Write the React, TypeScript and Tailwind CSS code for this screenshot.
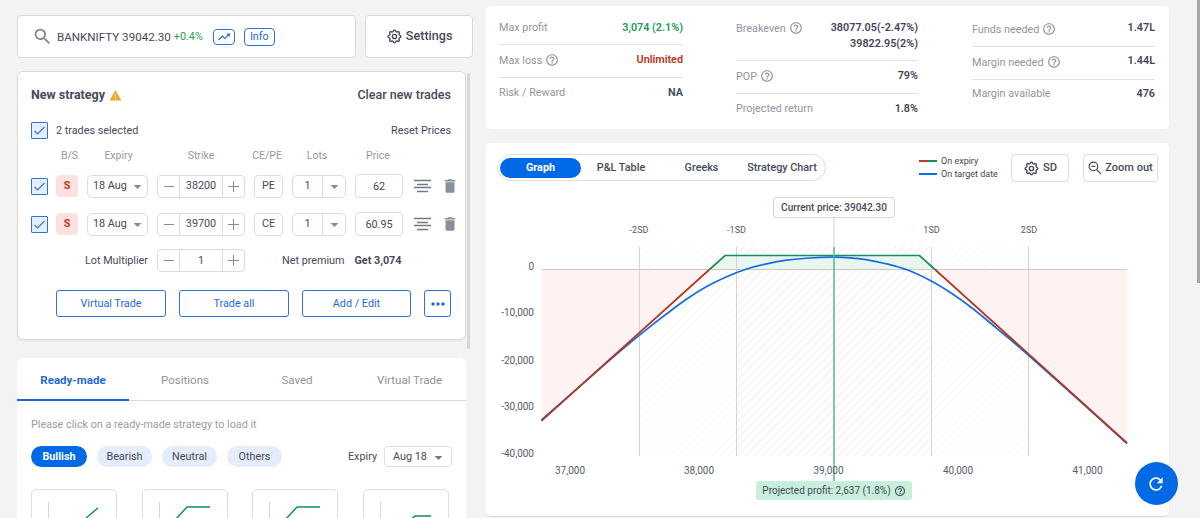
import type { ReactNode } from "react";
import { MdArrowDropDown, MdDelete, MdHelpOutline, MdMoreHoriz, MdRefresh, MdSearch, MdTrendingUp, MdWarning } from "react-icons/md";
import { TbSettings } from "react-icons/tb";

const trades = [
  { strike: "38200", type: "PE", price: "62" },
  { strike: "39700", type: "CE", price: "60.95" },
];

// Target date P&L curve
const curve = [
  [541.5, 420], [600, 368.5], [625, 347], [646.7, 329.3], [666.7, 313.8], [686.7, 299], [706.7, 286.5],
  [726.7, 276.7], [746.7, 269], [766.7, 263.8], [786.7, 260.2], [810, 258], [833, 257.2],
  [850, 257.8], [866, 259.6], [886, 263.7], [908.3, 270.3], [931.7, 281.3], [953.3, 294.5],
  [973.3, 309], [996.7, 328.3], [1030, 356.5], [1127, 443.5],
];

function smooth(p: number[][]) {
  let d = `M${p[0][0]} ${p[0][1]}`;
  for (let i = 0; i < p.length - 1; i++) {
    const a = p[i - 1] ?? p[i];
    const b = p[i];
    const c = p[i + 1];
    const e = p[i + 2] ?? c;
    d += `C${b[0] + (c[0] - a[0]) / 6} ${b[1] + (c[1] - a[1]) / 6} ${c[0] - (e[0] - b[0]) / 6} ${c[1] - (e[1] - b[1]) / 6} ${c[0]} ${c[1]}`;
  }
  return d;
}

function Checkbox() {
  return (
    <span className="flex h-[17px] w-[17px] shrink-0 items-center justify-center rounded-[1px] border border-[#2f73d9] bg-[#e5effc]">
      <svg className="h-[11px] w-[13px] fill-none stroke-[#2f73d9]" viewBox="0 0 13 11">
        <path d="M1.5 6 4.5 9 11.5 2" strokeWidth="1.1" />
      </svg>
    </span>
  );
}

function Stepper({ value }: { value: string }) {
  return (
    <div className="flex h-[23px] w-[88px] shrink-0 rounded-[4px] border border-[#dcdcdc]">
      <span className="flex w-[21px] items-center justify-center">
        <span className="h-px w-[10px] bg-[#8c8c8c]" />
      </span>
      <span className="flex w-[44px] items-center justify-center border-x border-[#dcdcdc] pt-px">{value}</span>
      <span className="flex flex-1 items-center justify-center">
        <svg className="h-[11px] w-[11px] stroke-[#8c8c8c]" viewBox="0 0 11 11">
          <path d="M0 5.5h11M5.5 0v11" strokeWidth="1" />
        </svg>
      </span>
    </div>
  );
}

function TradeRow({ strike, type, price }: { strike: string; type: string; price: string }) {
  return (
    <div className="flex h-6 items-center">
      <Checkbox />
      <span className="ml-2 flex h-[22px] w-[22px] shrink-0 items-center justify-center rounded-[4px] bg-[#fde0e0] pt-px font-bold text-[#c9331f]">S</span>
      <span className="ml-[9px] flex h-[23px] w-[61px] shrink-0 items-center justify-between rounded-[5px] border border-[#dcdcdc] pt-px pl-[5px]">
        18 Aug
        <MdArrowDropDown className="h-[19px] w-[19px] text-[#8b8b8b]" />
      </span>
      <div className="ml-[9px]">
        <Stepper value={strike} />
      </div>
      <span className="ml-[9px] flex h-[23px] w-[29px] shrink-0 items-center justify-center rounded-[4px] border border-[#dcdcdc] pt-px">{type}</span>
      <span className="ml-[9px] flex h-[23px] w-[54px] shrink-0 rounded-[5px] border border-[#dcdcdc]">
        <span className="flex w-[30px] items-center justify-center border-r border-[#dcdcdc] pt-px">1</span>
        <span className="flex flex-1 items-center justify-center">
          <MdArrowDropDown className="h-[19px] w-[19px] text-[#8b8b8b]" />
        </span>
      </span>
      <span className="ml-[9px] flex h-6 w-[48px] shrink-0 items-center justify-center rounded-[4px] border border-[#dcdcdc] pt-[2px]">{price}</span>
      <svg className="ml-[11px] h-[14px] w-[17px] shrink-0 stroke-[#737a85]" viewBox="0 0 17 14">
        <path d="M0 1.5h17M3 5.5h11M0 8.5h17M3 12.5h11" strokeWidth="1.3" />
      </svg>
      <MdDelete className="ml-[10px] h-[18px] w-[18px] shrink-0 text-[#87909b]" />
    </div>
  );
}

function Stat({ label, help, className, children }: { label: string; help?: boolean; className: string; children: ReactNode }) {
  return (
    <div className={`flex items-start justify-between border-[#e2e2e2] ${className}`}>
      <span className="mt-px flex h-4 items-center gap-1 text-[#8f95a1]">
        {label}
        {help && <MdHelpOutline className="relative -top-px -ml-px h-[14px] w-[14px] text-[#8b919c]" />}
      </span>
      <span className="mt-px text-right leading-4 font-semibold text-[#3f4657]">{children}</span>
    </div>
  );
}

function Chart() {
  return (
    <svg className="block h-[326px] w-[683px]" viewBox="486 190 683 326" fontFamily="Roboto, sans-serif" fontSize="10" fill="#565b6b">
      <defs>
        <pattern id="hatch" width="8.4" height="8.4" patternUnits="userSpaceOnUse">
          <path d="M-1 9.4 9.4 -1M-2 2 2-2M6.4 10.4l4-4" stroke="#e6e6e6" strokeWidth=".9" />
        </pattern>
        <pattern id="hatchLight" width="8.4" height="8.4" patternUnits="userSpaceOnUse">
          <path d="M-1 9.4 9.4 -1M-2 2 2-2M6.4 10.4l4-4" stroke="#f1f1f1" strokeWidth=".9" />
        </pattern>
      </defs>

      {/* Hatched deviation bands */}
      <path d="M639.5 246.5H736.5V456H639.5zM931.5 246.5H1028.5V456H931.5z" fill="url(#hatchLight)" />
      <path d="M736.5 246.5H931.5V456H736.5z" fill="url(#hatch)" />

      {/* Profit and loss areas */}
      <path d="M541.5 269.5H709L541.5 420.5zM935 269.5H1127V443z" fill="#fff1f1" fillOpacity=".9" />
      <path d="M709 269.5 725 255.5H919.5L935 269.5z" fill="#e5f6ed" fillOpacity=".85" />

      <path d="M639.5 246.5V456M736.5 246.5V456M931.5 246.5V456M1028.5 246.5V456M834 217V247" stroke="#d3d3d8" />
      <path d="M541.5 269.5H1127" stroke="#cdc6ca" />

      <path d={smooth(curve)} fill="none" stroke="#156de3" strokeWidth="1.7" />
      <path d="M541.5 420.8 709.5 269.5M935 269.5 1127 443" fill="none" stroke="#b5371c" strokeWidth="1.7" />
      <path d="M709.5 269.5 725 255.5H919.5L935 269.5" fill="none" stroke="#149057" strokeWidth="1.7" />
      <path d="M834 247V482" stroke="#55b88f" strokeWidth="1.5" />

      <g textAnchor="end">
        <text x="534" y="270">0</text>
        <text x="534" y="316">-10,000</text>
        <text x="534" y="363.5">-20,000</text>
        <text x="534" y="410">-30,000</text>
        <text x="534" y="456.5">-40,000</text>
      </g>
      <g textAnchor="middle">
        <text x="570" y="473.5">37,000</text>
        <text x="699" y="473.5">38,000</text>
        <text x="828.5" y="473.5">39,000</text>
        <text x="958" y="473.5">40,000</text>
        <text x="1087.5" y="473.5">41,000</text>
      </g>
      <g textAnchor="middle" fontSize="9">
        <text x="639" y="233">-2SD</text>
        <text x="736.5" y="233">-1SD</text>
        <text x="931.5" y="233">1SD</text>
        <text x="1029" y="233">2SD</text>
      </g>
    </svg>
  );
}

export default function App() {
  return (
    <div className="relative flex h-[518px] w-[1200px] overflow-hidden bg-[#f3f3f3] font-['Roboto',sans-serif] text-[10.8px] text-[#444a5a]">
      {/* Left side: strategy builder */}
      <div className="ml-[17px] w-[456px] shrink-0 pt-[15px]">
        <div className="flex h-[43px] gap-[9px]">
          <div className="flex w-[340px] items-center rounded-[4px] border border-[#dadada] bg-white pl-[14px]">
            <MdSearch className="h-[21px] w-[21px] text-[#858585]" />
            <span className="ml-[4px] pt-[2px] text-[11.6px]">BANKNIFTY 39042.30</span>
            <span className="ml-[3px] pt-px text-[#27a35a]">+0.4%</span>
            <span className="ml-[10px] flex h-4 w-[22px] items-center justify-center rounded-[4px] border border-[#2f73d9] text-[#1c69dd]">
              <MdTrendingUp className="h-[14px] w-[14px]" />
            </span>
            <span className="ml-[9px] flex h-[18px] w-[31px] items-center justify-center rounded-[4px] border border-[#2f73d9] pt-px text-[#1c69dd]">Info</span>
          </div>
          <div className="flex w-[108px] items-center justify-center gap-[3px] rounded-[4px] border border-[#dadada] bg-white text-[12.6px] font-medium">
            <TbSettings className="h-[17px] w-[17px]" />
            Settings
          </div>
        </div>

        <div className="mt-[13px] flex gap-px">
          <div className="h-[269px] w-[449px] rounded-[6px] border border-[#dadada] bg-white pt-[15px] pr-[14px] pl-[13px] shadow-xs">
            <div className="flex h-4 items-center justify-between text-[12.5px] font-medium">
              <span className="flex items-center gap-1 font-bold">
                New strategy
                <MdWarning className="h-[13px] w-[13px] text-[#e8ab2f]" />
              </span>
              Clear new trades
            </div>
            <div className="mt-[18px] flex h-[18px] items-center">
              <Checkbox />
              <span className="ml-2 flex-1 pt-[2px]">2 trades selected</span>
              <span className="pt-[2px]">Reset Prices</span>
            </div>
            <div className="mt-[10px] flex h-[14px] items-center text-[10.5px] text-[#999]">
              <span className="ml-[26px] w-[25px] text-center">B/S</span>
              <span className="ml-[6px] w-[61px] text-center">Expiry</span>
              <span className="ml-[8px] w-[88px] text-center">Strike</span>
              <span className="ml-[3px] w-[38px] text-center">CE/PE</span>
              <span className="ml-[7px] w-[48px] text-center">Lots</span>
              <span className="ml-[13px] w-[48px] text-center">Price</span>
            </div>
            <div className="mt-[11px] flex flex-col gap-[14px]">
              {trades.map((t) => (
                <TradeRow key={t.strike} {...t} />
              ))}
            </div>
            <div className="mt-[13px] flex h-[23px] items-center">
              <span className="mr-[9px] w-[117px] pt-px text-right">Lot Multiplier</span>
              <Stepper value="1" />
              <span className="ml-[37px] pt-px">Net premium</span>
              <span className="ml-[10px] pt-px font-bold">Get 3,074</span>
            </div>
            <div className="mt-[18px] ml-[25px] flex h-[27px] gap-[13px] text-[#1c69dd]">
              <span className="flex w-[110px] items-center justify-center rounded-[3px] border border-[#2f73d9] pt-px">Virtual Trade</span>
              <span className="flex w-[110px] items-center justify-center rounded-[3px] border border-[#2f73d9] pt-px">Trade all</span>
              <span className="flex w-[109px] items-center justify-center rounded-[3px] border border-[#2f73d9] pt-px">Add / Edit</span>
              <span className="flex w-[27px] items-center justify-center rounded-[3px] border border-[#2f73d9]">
                <MdMoreHoriz className="h-5 w-5" />
              </span>
            </div>
          </div>
          <div className="mt-[2px] h-[276px] w-[3px] rounded bg-[#d8d8d8]" />
        </div>

        <div className="mt-[9px] h-[170px] w-[449px] rounded-t-[6px] bg-white">
          <div className="flex h-[43px] border-b border-[#d9d9dc] text-[11.5px] text-[#8f939c]">
            <span className="flex h-[43px] w-[112px] items-center justify-center border-b-2 border-[#1467dd] pt-[5px] font-bold text-[#1c69dd]">Ready-made</span>
            <span className="flex w-[112px] items-center justify-center pt-[4px]">Positions</span>
            <span className="flex w-[112px] items-center justify-center pt-[4px]">Saved</span>
            <span className="flex w-[113px] items-center justify-center pt-[4px]">Virtual Trade</span>
          </div>
          <div className="pt-[15px] pr-[14px] pl-[14px]">
            <div className="h-4 leading-[18px] text-[#999da5]">Please click on a ready-made strategy to load it</div>
            <div className="mt-[14px] flex h-[21px] items-center gap-[10px]">
              <span className="flex h-[21px] w-[56px] items-center justify-center rounded-full bg-[#006ae6] pt-px font-bold text-white">Bullish</span>
              <span className="flex h-[21px] w-[55px] items-center justify-center rounded-full bg-[#e4edf9] pt-px">Bearish</span>
              <span className="flex h-[21px] w-[55px] items-center justify-center rounded-full bg-[#e4edf9] pt-px">Neutral</span>
              <span className="flex h-[21px] w-[55px] items-center justify-center rounded-full bg-[#e4edf9] pt-px">Others</span>
              <span className="ml-auto pt-px">Expiry</span>
              <span className="-ml-[3px] flex h-[21px] w-[68px] items-center justify-between rounded-[4px] border border-[#dedede] pt-px pr-[3px] pl-2">
                Aug 18
                <MdArrowDropDown className="h-[19px] w-[19px] text-[#7b7b7b]" />
              </span>
            </div>
            <div className="mt-[22px] flex gap-[24.6px]">
              {["M54 28 66 18", "M32 30 44 17H67", "M32 30 44 17H67", "M46 30 51 26H67"].map((d, i) => (
                <span key={i} className="h-[60px] w-[86px] shrink-0 rounded-[5px] border border-[#dedede]">
                  <svg className="h-[58px] w-[84px] fill-none" viewBox="0 0 84 58">
                    <path d="M16.5 12V50" stroke="#d8d8d8" />
                    <path d={d} stroke="#129057" strokeWidth="1.5" />
                  </svg>
                </span>
              ))}
            </div>
          </div>
        </div>
      </div>

      {/* Right side: numbers and payoff */}
      <div className="ml-[13px] w-[683px] shrink-0 pt-[6px]">
        <div className="flex h-[123px] rounded-[5px] bg-white pl-[13px]">
          <div className="w-[184px] pt-[13px]">
            <Stat label="Max profit" className="h-[26px] border-b">
              <span className="text-[#229a58]">3,074 (2.1%)</span>
            </Stat>
            <Stat label="Max loss" help className="h-[33px] border-b pt-[7px]">
              <span className="relative -top-px text-[#b93220]">Unlimited</span>
            </Stat>
            <Stat label="Risk / Reward" className="pt-[6px]">NA</Stat>
          </div>
          <div className="ml-[53px] w-[182px] pt-[14px]">
            <Stat label="Breakeven" help className="h-[41px] border-b">
              <span className="relative -top-px block">38077.05(-2.47%)<br />39822.95(2%)</span>
            </Stat>
            <Stat label="POP" help className="h-[33px] border-b pt-[7px]">
              <span className="relative -top-px">79%</span>
            </Stat>
            <Stat label="Projected return" className="pt-[6px]">1.8%</Stat>
          </div>
          <div className="ml-[54px] w-[183px] pt-[15px]">
            <Stat label="Funds needed" help className="h-[26px] border-b">
              <span className="relative -top-[2px]">1.47L</span>
            </Stat>
            <Stat label="Margin needed" help className="h-[33px] border-b pt-[7px]">
              <span className="relative -top-[2px]">1.44L</span>
            </Stat>
            <Stat label="Margin available" className="pt-[5px]">476</Stat>
          </div>
        </div>

        <div className="relative mt-[14px] h-[374px] rounded-[5px] border-b border-[#d5d8de] bg-white">
          <div className="flex h-[47px] items-start pt-[11px]">
            <div className="ml-[11px] flex h-[27px] w-[329px] items-center rounded-full border border-[#dedede] pl-[2px] font-medium">
              <span className="flex h-[20px] w-[81px] items-center justify-center rounded-full bg-[#006ae6] pt-px font-bold text-white">Graph</span>
              <span className="w-[80px] pt-px text-center">P&amp;L Table</span>
              <span className="w-[81px] pt-px text-center">Greeks</span>
              <span className="w-[80px] pt-px text-center whitespace-nowrap">Strategy Chart</span>
            </div>
            <div className="ml-[93px] flex h-[27px] w-[80px] flex-col justify-center text-[9px] leading-[13px] whitespace-nowrap text-[#3f4657]">
              <span className="flex items-center gap-1">
                <span className="h-[2px] w-[9px] bg-[#c0392b]" />
                <span className="-ml-1 h-[2px] w-[9px] bg-[#149057]" />
                On expiry
              </span>
              <span className="flex items-center gap-1">
                <span className="h-[2px] w-[18px] bg-[#156de3]" />
                On target date
              </span>
            </div>
            <span className="ml-[12px] flex h-[28px] w-[58px] items-center justify-center gap-[3px] rounded-[4px] border border-[#dedede] text-[11.2px] font-medium">
              <TbSettings className="h-[17px] w-[17px]" />
              SD
            </span>
            <span className="ml-[14px] flex h-[28px] w-[75px] items-center justify-center gap-[3px] rounded-[4px] border border-[#dedede] text-[11px] font-medium whitespace-nowrap">
              <svg className="h-[14px] w-[14px] shrink-0 fill-none stroke-[#4a5060]" viewBox="0 0 14 14">
                <path d="M8.5 8.5 13.2 13.2M3.4 5.4h4" strokeWidth="1.2" />
                <circle cx="5.4" cy="5.4" r="4.3" strokeWidth="1.2" />
              </svg>
              Zoom out
            </span>
          </div>
          <Chart />
          <div className="absolute top-[54px] left-[287px] flex h-[21px] w-[122px] items-center justify-center rounded-[3px] border border-[#d5d5d8] bg-white text-[10px] font-medium">
            Current price: 39042.30
          </div>
          <div className="absolute top-[338px] left-[270px] flex h-[19px] w-[156px] items-center justify-center gap-[3px] rounded-[3px] bg-[#c9efdc] text-[10px]">
            Projected profit: 2,637 (1.8%)
            <MdHelpOutline className="h-3 w-3" />
          </div>
        </div>
      </div>

      <div className="absolute right-[22.5px] bottom-[13px] flex h-[43px] w-[43px] items-center justify-center rounded-full bg-[#006ae6] text-white">
        <MdRefresh className="h-5 w-5" />
      </div>
      <div className="absolute top-0 right-0 h-[283px] w-[3px] bg-[#a8a8a8]" />
    </div>
  );
}
